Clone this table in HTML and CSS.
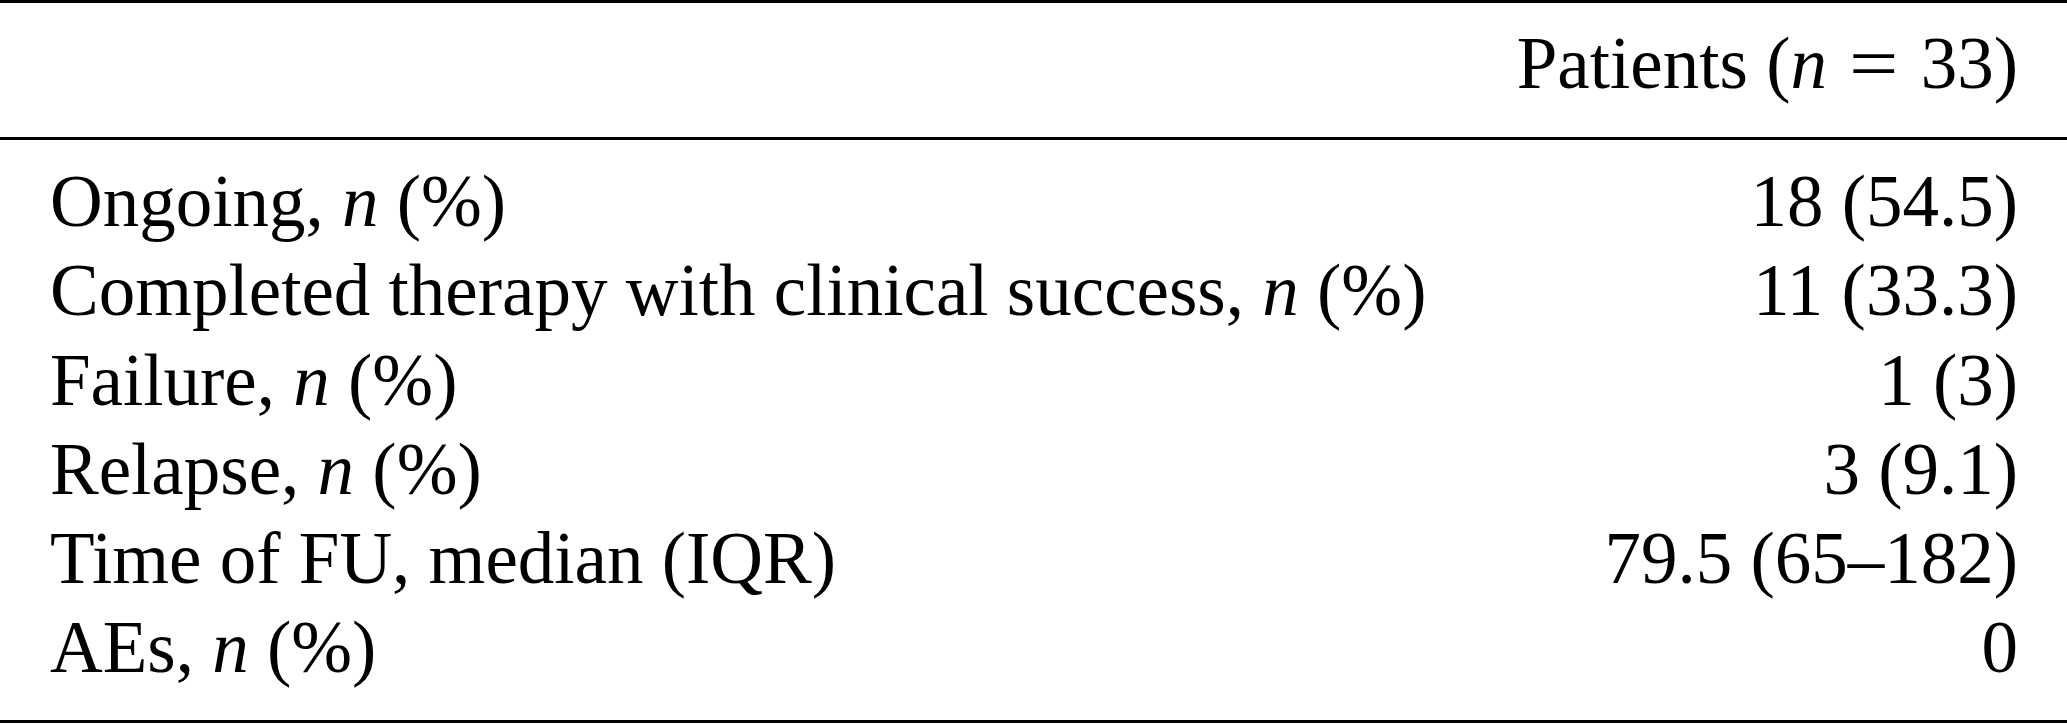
FILE: index.html
```html
<!DOCTYPE html>
<html lang="en">
<head>
<meta charset="utf-8">
<title>Outcomes</title>
<link rel="stylesheet" href="styles.css">
</head>
<body>
<table class="results">
  <thead>
    <tr>
      <th class="label-col"></th>
      <th class="value-col">Patients (<i>n</i><span class="eq">=</span>33)</th>
    </tr>
  </thead>
  <tbody>
    <tr class="first"><td class="label">Ongoing, <i>n</i> (%)</td><td class="value">18 (54.5)</td></tr>
    <tr><td class="label">Completed therapy with clinical success, <i>n</i> (%)</td><td class="value">11 (33.3)</td></tr>
    <tr><td class="label">Failure, <i>n</i> (%)</td><td class="value">1 (3)</td></tr>
    <tr><td class="label">Relapse, <i>n</i> (%)</td><td class="value">3 (9.1)</td></tr>
    <tr><td class="label">Time of FU, median (IQR)</td><td class="value">79.5 (65–182)</td></tr>
    <tr class="last"><td class="label">AEs, <i>n</i> (%)</td><td class="value">0</td></tr>
  </tbody>
</table>
</body>
</html>
```

FILE: styles.css
```css
html, body {
  margin: 0;
  padding: 0;
  background: #ffffff;
}

body {
  font-family: "Liberation Serif", "Times New Roman", serif;
  font-size: 73px;
  color: #000000;
}

.results {
  width: 100%;
  border-collapse: collapse;
  border-top: 3px solid #000;
  border-bottom: 3px solid #000;
}

.results thead tr {
  border-bottom: 3px solid #000;
}

.results th,
.results td {
  padding: 0;
  line-height: 89.2px;
  font-weight: normal;
  white-space: nowrap;
}

.results th {
  padding-top: 16px;
  padding-bottom: 29px;
}

.label-col,
.label {
  text-align: left;
  padding-left: 50px !important;
}

.value-col,
.value {
  text-align: right;
  padding-right: 49px !important;
}

.results tr.first td {
  padding-top: 17px;
}

.results tr.last td {
  padding-bottom: 28px;
}

.eq {
  display: inline-block;
  margin: 0 0.36em;
  transform: scaleX(1.2);
}

i {
  font-style: italic;
}
```
